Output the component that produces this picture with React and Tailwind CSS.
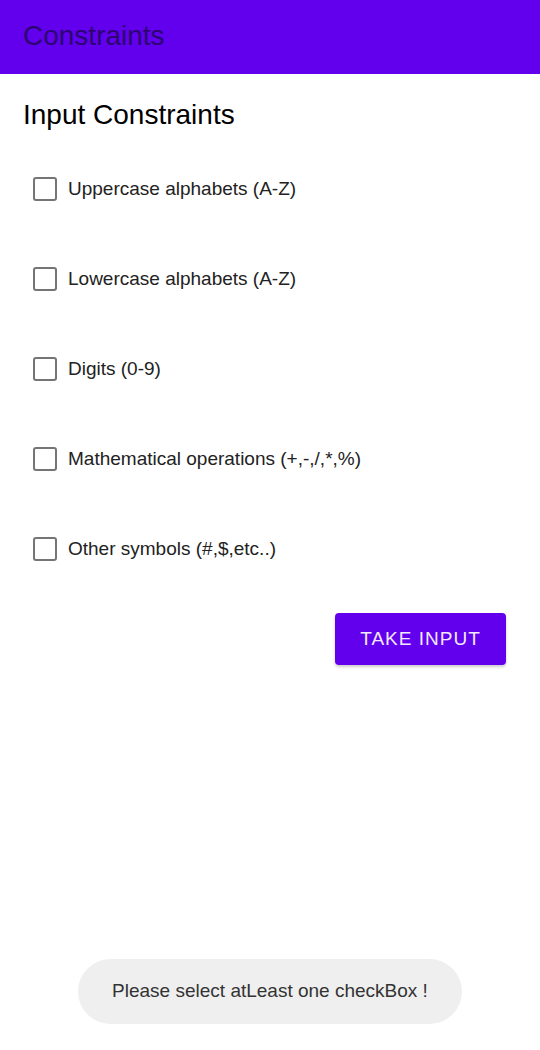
import React from "react";

const items = [
  "Uppercase alphabets (A-Z)",
  "Lowercase alphabets (A-Z)",
  "Digits (0-9)",
  "Mathematical operations (+,-,/,*,%)",
  "Other symbols (#,$,etc..)",
];

export default function App() {
  return (
    <div className="w-[540px] h-[1050px] bg-white flex flex-col" style={{ fontFamily: '"Liberation Sans", Arial, sans-serif' }}>
      <div className="h-[74px] bg-[#6200ee] flex items-center pl-[23px] shrink-0">
        <span className="text-[28px] text-[#2c0570] leading-none mt-[-2px]">Constraints</span>
      </div>
      <div className="flex flex-col px-[23px]">
        <h1 className="text-[28px] text-black leading-none mt-[27px]">Input Constraints</h1>
        <div className="flex flex-col mt-[48px] pl-[10px] gap-[66px]">
          {items.map((t) => (
            <label key={t} className="flex items-center h-[24px]">
              <span className="w-[24px] h-[24px] rounded-[3px] border-[2.5px] border-[#757575] shrink-0" />
              <span className="ml-[11px] text-[19px] text-[#222]">{t}</span>
            </label>
          ))}
        </div>
        <div className="flex justify-end mt-[52px] pr-[11px]">
          <button className="w-[171px] h-[52px] rounded-[4px] bg-[#6200ee] text-[#f3e9ff] text-[19px] tracking-[1px] shadow-[0_2px_3px_rgba(0,0,0,0.2)]">
            TAKE INPUT
          </button>
        </div>
      </div>
      <div className="flex-1" />
      <div className="flex justify-center mb-[26px]">
        <div className="w-[384px] h-[65px] rounded-full bg-[#efefef] flex items-center justify-center text-[19px] text-[#333]">
          Please select atLeast one checkBox !
        </div>
      </div>
    </div>
  );
}
